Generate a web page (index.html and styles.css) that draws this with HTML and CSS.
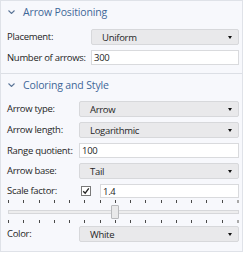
FILE: index.html
```html
<!DOCTYPE html>
<html>
<head>
<meta charset="utf-8">
<link rel="stylesheet" href="styles.css">
</head>
<body>
<div class="panel">
  <section class="sec sec-pos">
    <header class="sec-head">
      <svg class="chev" viewBox="0 0 7 4" width="7" height="4"><path d="M0.5 0.5 L3.5 3.5 L6.5 0.5"/></svg>
      <span>Arrow Positioning</span>
    </header>
    <div class="form">
      <span class="lbl">Placement:</span>
      <div class="dd"><span>Uniform</span><i class="caret"></i></div>
      <span class="lbl">Number of arrows:</span>
      <div class="tx">300</div>
    </div>
  </section>
  <section class="sec sec-style">
    <header class="sec-head">
      <svg class="chev" viewBox="0 0 7 4" width="7" height="4"><path d="M0.5 0.5 L3.5 3.5 L6.5 0.5"/></svg>
      <span>Coloring and Style</span>
    </header>
    <div class="form">
      <span class="lbl">Arrow type:</span>
      <div class="dd"><span>Arrow</span><i class="caret"></i></div>
      <span class="lbl">Arrow length:</span>
      <div class="dd"><span>Logarithmic</span><i class="caret"></i></div>
      <span class="lbl">Range quotient:</span>
      <div class="tx">100</div>
      <span class="lbl">Arrow base:</span>
      <div class="dd"><span>Tail</span><i class="caret"></i></div>
      <span class="lbl">Scale factor:</span>
      <div class="pair">
        <span class="cb"><svg viewBox="0 0 8 8" width="8" height="8"><path d="M1.2 4.2 L3.2 6.2 L6.8 1.4"/></svg></span>
        <div class="tx grow">1.4</div>
      </div>
      <div class="slider">
        <div class="ticks"><i></i><i></i><i></i><i></i><i></i><i></i><i></i><i></i><i></i><i></i><i></i><i></i><i></i><i></i><i></i><i class="end"></i></div>
        <div class="track-area">
          <div class="track"></div>
          <div class="thumb" style="left:44.8%"></div>
        </div>
        <div class="ticks"><i></i><i></i><i></i><i></i><i></i><i></i><i></i><i></i><i></i><i></i><i></i><i></i><i></i><i></i><i></i><i class="end"></i></div>
      </div>
      <span class="lbl">Color:</span>
      <div class="dd"><span>White</span><i class="caret"></i></div>
    </div>
  </section>
</div>
</body>
</html>
```
FILE: styles.css
```css
html, body {
  margin: 0;
  padding: 0;
  background: #ffffff;
}
body {
  width: 246px;
  height: 253px;
  overflow: hidden;
  font-family: "Open Sans", "Noto Sans", sans-serif;
  font-size: 9.5px;
  letter-spacing: -0.3px;
  color: #1f1f1f;
}
.panel {
  width: 243px;
  box-sizing: border-box;
  background: #f7f8fc;
  border: 1px solid #dfe2e8;
}
.sec + .sec {
  border-top: 1px solid #dcdfe5;
}
.sec-head {
  height: 22px;
  display: flex;
  align-items: center;
  gap: 8px;
  padding-left: 7px;
  color: #3e6798;
  font-size: 10.5px;
  letter-spacing: -0.15px;
}
.chev {
  display: block;
  flex: none;
}
.chev path {
  fill: none;
  stroke: #5b7597;
  stroke-width: 1.1;
}
.form {
  display: grid;
  grid-template-columns: 84px 1fr;
  row-gap: 5px;
  align-items: center;
  padding: 6px 3px 8px 6px;
}
.sec-style .form {
  grid-template-columns: 72px 1fr;
  padding-top: 5px;
  padding-bottom: 9px;
}
.lbl {
  white-space: nowrap;
  line-height: 14px;
}
.dd {
  height: 16px;
  box-sizing: border-box;
  display: flex;
  align-items: center;
  justify-content: space-between;
  padding: 0 6px 0 10px;
  background: #e9e9eb;
  border: 1px solid #d7d8db;
  border-radius: 2px;
}
.caret {
  width: 0;
  height: 0;
  border-left: 2.5px solid transparent;
  border-right: 2.5px solid transparent;
  border-top: 3px solid #111;
}
.tx {
  height: 15px;
  box-sizing: border-box;
  display: flex;
  align-items: center;
  padding-left: 2px;
  background: #ffffff;
  border: 1px solid #d9dadd;
}
.pair {
  display: flex;
  align-items: center;
  gap: 9px;
  padding-left: 2px;
}
.pair .tx {
  height: 14px;
}
.grow {
  flex: 1;
}
.cb {
  width: 10px;
  height: 10px;
  box-sizing: border-box;
  border: 1px solid #7a7a7a;
  background: #fff;
  display: flex;
  align-items: center;
  justify-content: center;
}
.cb svg {
  display: block;
}
.cb path {
  fill: none;
  stroke: #222;
  stroke-width: 1.3;
}
.slider {
  grid-column: 1 / -1;
  margin: -4px 0 -3px;
  padding-top: 1px;
}
.ticks {
  height: 4px;
  display: flex;
  justify-content: space-between;
  padding-left: 1px;
}
.ticks i {
  width: 1px;
  height: 3px;
  background: #4a4a4a;
}
.ticks i.end {
  width: 2px;
  background: #a9a9a9;
}
.track-area {
  position: relative;
  height: 16px;
  display: flex;
  align-items: center;
}
.track {
  flex: 1;
  height: 4px;
  box-sizing: border-box;
  margin-left: 1px;
  background: #ededee;
  border: 1px solid #d6d7da;
}
.thumb {
  position: absolute;
  top: 1px;
  width: 8px;
  height: 14px;
  box-sizing: border-box;
  background: #e9e9ea;
  border: 1px solid #b9babd;
  border-radius: 1px;
}
```
